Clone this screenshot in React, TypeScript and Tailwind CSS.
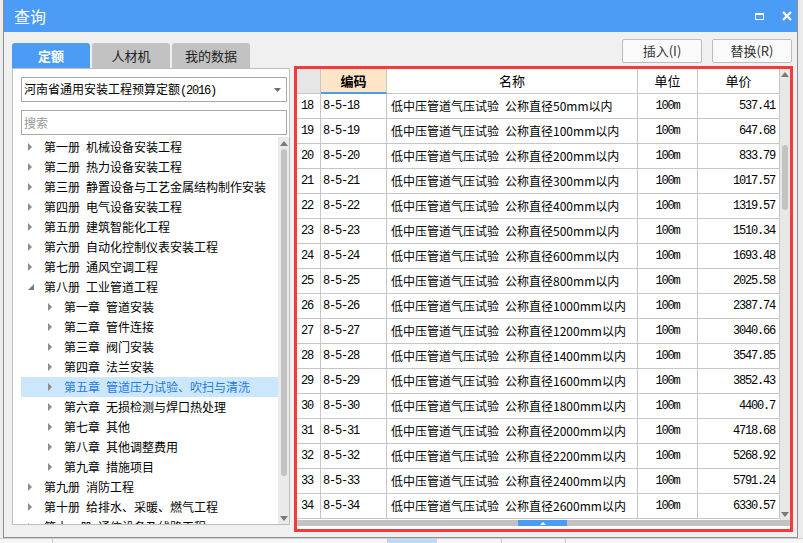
import React from "react";

const cjk = "font-['Noto_Sans_CJK_SC',sans-serif]";
const mono = "font-['Liberation_Mono','Noto_Sans_CJK_SC',monospace] text-[12px] tracking-[-1.2px]";

const rows: [number, string, string, string][] = [
  [18, "8-5-18", "50", "537.41"],
  [19, "8-5-19", "100", "647.68"],
  [20, "8-5-20", "200", "833.79"],
  [21, "8-5-21", "300", "1017.57"],
  [22, "8-5-22", "400", "1319.57"],
  [23, "8-5-23", "500", "1510.34"],
  [24, "8-5-24", "600", "1693.48"],
  [25, "8-5-25", "800", "2025.58"],
  [26, "8-5-26", "1000", "2387.74"],
  [27, "8-5-27", "1200", "3040.66"],
  [28, "8-5-28", "1400", "3547.85"],
  [29, "8-5-29", "1600", "3852.43"],
  [30, "8-5-30", "1800", "4400.7"],
  [31, "8-5-31", "2000", "4718.68"],
  [32, "8-5-32", "2200", "5268.92"],
  [33, "8-5-33", "2400", "5791.24"],
  [34, "8-5-34", "2600", "6330.57"],
];

type Node = { level: 1 | 2; no: string; name: string; open?: boolean; selected?: boolean };

const tree: Node[] = [
  { level: 1, no: "第一册", name: "机械设备安装工程" },
  { level: 1, no: "第二册", name: "热力设备安装工程" },
  { level: 1, no: "第三册", name: "静置设备与工艺金属结构制作安装" },
  { level: 1, no: "第四册", name: "电气设备安装工程" },
  { level: 1, no: "第五册", name: "建筑智能化工程" },
  { level: 1, no: "第六册", name: "自动化控制仪表安装工程" },
  { level: 1, no: "第七册", name: "通风空调工程" },
  { level: 1, no: "第八册", name: "工业管道工程", open: true },
  { level: 2, no: "第一章", name: "管道安装" },
  { level: 2, no: "第二章", name: "管件连接" },
  { level: 2, no: "第三章", name: "阀门安装" },
  { level: 2, no: "第四章", name: "法兰安装" },
  { level: 2, no: "第五章", name: "管道压力试验、吹扫与清洗", selected: true },
  { level: 2, no: "第六章", name: "无损检测与焊口热处理" },
  { level: 2, no: "第七章", name: "其他" },
  { level: 2, no: "第八章", name: "其他调整费用" },
  { level: 2, no: "第九章", name: "措施项目" },
  { level: 1, no: "第九册", name: "消防工程" },
  { level: 1, no: "第十册", name: "给排水、采暖、燃气工程" },
  { level: 1, no: "第十一册", name: "通信设备及线路工程" },
];

const Up = () => (
  <svg width="8" height="5" viewBox="0 0 8 5">
    <polygon points="0,5 8,5 4,0" fill="#7a7a7a" />
  </svg>
);
const Down = () => (
  <svg width="8" height="5" viewBox="0 0 8 5">
    <polygon points="0,0 8,0 4,5" fill="#7a7a7a" />
  </svg>
);

const TreeRow = ({ node }: { node: Node }) => (
  <div
    className={`h-[20px] flex items-center shrink-0 ${node.level === 1 ? "pl-[7px]" : "pl-[27px]"} ${
      node.selected ? "bg-[#cce6fc] text-[#1f7ae4]" : "text-black"
    }`}
  >
    <div className="w-[16px] flex items-center">
      {node.open ? (
        <svg width="6" height="6" viewBox="0 0 6 6">
          <polygon points="0,6 6,6 6,0" fill="#7c7c7c" />
        </svg>
      ) : (
        <div className="w-0 h-0 border-y-[4px] border-y-transparent border-l-[4px] border-l-[#8c8c8c]" />
      )}
    </div>
    <span className="whitespace-nowrap">{node.no}</span>
    <span className="whitespace-nowrap ml-[6px]">{node.name}</span>
  </div>
);

export default function App() {
  return (
    <div className={`w-[803px] h-[543px] bg-[#ececec] overflow-hidden flex flex-col ${cjk}`}>
      <div className="ml-[3px] w-[795px] h-[538px] shrink-0 border-x border-b border-[#8e8e8e] flex flex-col bg-[#f0f0f0]">
        {/* title bar */}
        <div className="h-[32px] shrink-0 bg-[#4a9cf5] flex items-center pl-[10px] pr-[5px] text-white">
          <span className="text-[16px] leading-none">查询</span>
          <div className="ml-auto flex items-center gap-[18px]">
            <div className="w-[9px] h-[7px] border-x-[1.5px] border-b-[1.5px] border-t-[2.5px] border-white" />
            <svg width="10" height="10" viewBox="0 0 10 10">
              <path d="M1 1 L9 9 M9 1 L1 9" stroke="#fff" strokeWidth="2.2" />
            </svg>
          </div>
        </div>

        {/* body */}
        <div className="flex-1 flex pl-[8px] pt-[7px]">
          {/* left column */}
          <div className="w-[278px] mt-[4px] flex flex-col">
            <div className="flex gap-[2px] h-[25px]">
              <div className="w-[78px] rounded-t-[3px] bg-[#4a9cf5] text-white font-bold text-[13px] flex items-center justify-center">
                定额
              </div>
              <div className="w-[78px] rounded-t-[3px] bg-[#c2c2c2] text-[#222] text-[13px] flex items-center justify-center">
                人材机
              </div>
              <div className="w-[78px] rounded-t-[3px] bg-[#c2c2c2] text-[#222] text-[13px] flex items-center justify-center">
                我的数据
              </div>
            </div>
            <div className="h-[457px] border border-[#bdbdbd] bg-white pt-[8px] pl-[8px] flex flex-col overflow-hidden">
              <div className="w-[266px] h-[25px] shrink-0 border border-[#a9a9a9] flex items-center pl-[2px] pr-[5px] text-[12px] text-black">
                <span className="whitespace-nowrap">
                  河南省通用安装工程预算定额<span className={mono}>(2016)</span>
                </span>
                <svg className="ml-auto" width="7" height="4" viewBox="0 0 7 4">
                  <polygon points="0,0 7,0 3.5,4" fill="#6e6e6e" />
                </svg>
              </div>
              <div className="w-[266px] h-[25px] shrink-0 mt-[8px] border border-[#a9a9a9] flex items-center pl-[2px] text-[12px] text-[#9a9a9a]">
                搜索
              </div>
              <div className="flex-1 mt-[2px] flex min-h-0">
                <div className="w-[257px] flex flex-col text-[12px] overflow-hidden">
                  {tree.map((n, i) => (
                    <TreeRow key={i} node={n} />
                  ))}
                </div>
                <div className="w-[11px] bg-[#eaeaea] flex flex-col items-center pt-[4px] pb-[3px]">
                  <Up />
                  <div className="w-[6px] h-[327px] mt-[3px] rounded-full bg-[#c3c3c3]" />
                  <div className="flex-1" />
                  <Down />
                </div>
              </div>
            </div>
          </div>

          {/* right column */}
          <div className="w-[499px] ml-[4px] flex flex-col">
            <div className="flex justify-end gap-[10px] pr-[1px] h-[24px]">
              <div className="w-[80px] rounded-[2px] border border-[#bcbcbc] bg-[#fafafa] text-[13px] text-[#333] flex items-center justify-center">
                插入(I)
              </div>
              <div className="w-[80px] rounded-[2px] border border-[#bcbcbc] bg-[#fafafa] text-[13px] text-[#333] flex items-center justify-center">
                替换(R)
              </div>
            </div>
            <div className="mt-[3px] h-[466px] border-[3px] border-[#f43a3a] bg-white flex flex-col">
              <div className="h-[451px] flex">
                <div className="w-[483px] flex flex-col overflow-hidden">
                  {/* header */}
                  <div className="h-[25px] flex shrink-0 text-[13px] text-black">
                    <div className="w-[24px] bg-[#e6e6e6] border-r border-b border-[#c6c6c6]" />
                    <div className="w-[66px] bg-[#fde6c8] border-r border-[#c6c6c6] border-b-2 border-b-[#4a9cf5] font-bold flex items-center justify-center">
                      编码
                    </div>
                    <div className="w-[251px] border-r border-b border-[#c6c6c6] flex items-center justify-center">
                      名称
                    </div>
                    <div className="w-[60px] border-r border-b border-[#c6c6c6] flex items-center justify-center">
                      单位
                    </div>
                    <div className="w-[82px] border-r border-b border-[#c6c6c6] flex items-center justify-center">
                      单价
                    </div>
                  </div>
                  {rows.map(([n, code, dia, price]) => (
                    <div key={n} className="h-[25px] shrink-0 flex border-b border-[#c6c6c6] text-black">
                      <div className={`w-[24px] border-r border-[#c6c6c6] flex items-center pl-[4px] ${mono}`}>
                        {n}
                      </div>
                      <div className={`w-[66px] border-r border-[#c6c6c6] flex items-center pl-[2px] ${mono}`}>
                        {code}
                      </div>
                      <div className="w-[251px] border-r border-[#c6c6c6] flex items-center pl-[4px] text-[12px] whitespace-nowrap">
                        低中压管道气压试验<span className="inline-block w-[6px]" />公称直径{dia}mm以内
                      </div>
                      <div className={`w-[60px] border-r border-[#c6c6c6] flex items-center justify-center ${mono}`}>
                        100m
                      </div>
                      <div className={`w-[82px] border-r border-[#c6c6c6] flex items-center justify-end pr-[4px] ${mono}`}>
                        {price}
                      </div>
                    </div>
                  ))}
                </div>
                <div className="w-[10px] bg-[#e8e8e8] flex flex-col items-center pt-[3px] pb-[3px]">
                  <Up />
                  <div className="w-[6px] h-[65px] mt-[68px] rounded-full bg-[#c3c3c3]" />
                  <div className="flex-1" />
                  <Down />
                </div>
              </div>
              <div className="h-[6px] bg-[#c2c2c2] flex">
                <div className="w-[221px]" />
                <div className="w-[49px] bg-[#4a9cf5] flex items-center justify-center">
                  <svg width="6" height="3" viewBox="0 0 6 3">
                    <polygon points="0,3 6,3 3,0" fill="#fff" />
                  </svg>
                </div>
              </div>
            </div>
          </div>
        </div>
      </div>
      {/* background application peeking below */}
      <div className="flex-1 flex border-t border-[#d0d0d0] bg-[#f6f6f6]">
        <div className="w-[53px] border-r border-[#c8c8c8]" />
        <div className="w-[335px] border-r border-[#c8c8c8]" />
        <div className="w-[49px] bg-[#bcdcf5]" />
        <div className="w-[65px] border-r border-[#c8c8c8]" />
        <div className="w-[64px] border-r border-[#c8c8c8]" />
      </div>
    </div>
  );
}
